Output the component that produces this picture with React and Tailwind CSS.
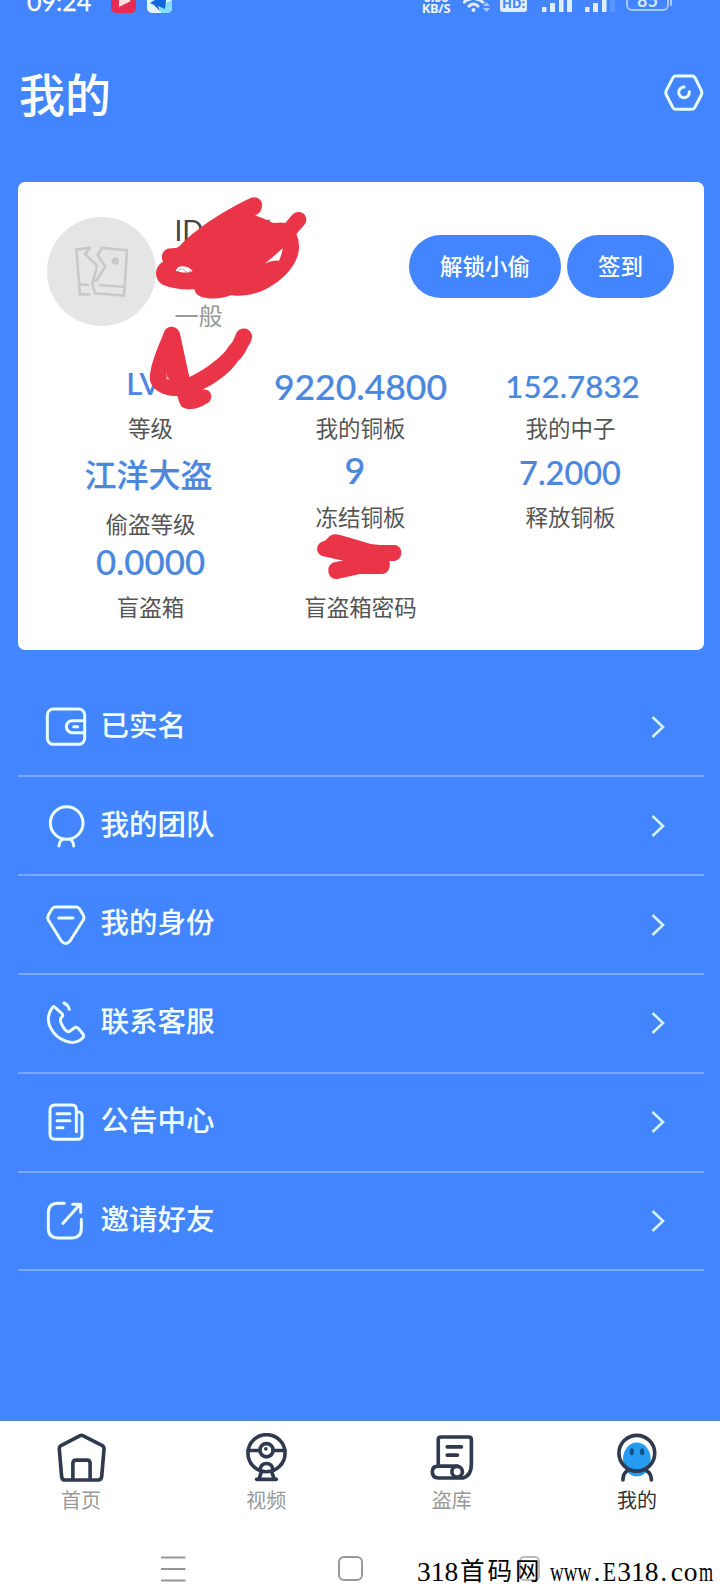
const stats = [
  { value: "LV", label: "等级", valueClass: "text-[31px] pr-[14px] pb-[8px]" },
  { value: "9220.4800", label: "我的铜板", valueClass: "text-[35.5px]" },
  { value: "152.7832", label: "我的中子", valueClass: "text-[31.3px] pl-[4px] pb-[3px]" },
  { value: "江洋大盗", label: "偷盗等级", valueClass: "text-[32px] pr-[4px] pb-[2px]", labelClass: "pt-[7px]" },
  { value: "9", label: "冻结铜板", valueClass: "text-[36px] pr-[11px] pb-[13px]" },
  { value: "7.2000", label: "释放铜板", valueClass: "text-[32.5px] pr-px pb-[7px]" },
  { value: "0.0000", label: "盲盗箱", valueClass: "text-[34.8px] pb-[7px]" },
  { value: "", label: "盲盗箱密码", valueClass: "text-[34px]" },
];

const menu = [
  {
    label: "已实名",
    viewBox: "135 75 132 132",
    icon: (
      <>
        <rect x="142" y="87" width="112" height="106" rx="18" />
        <path d="M254 122H217a18 18 0 0 0 0 36H254M221 140H233" />
      </>
    ),
  },
  {
    label: "我的团队",
    viewBox: "135 372 132 132",
    icon: (
      <>
        <circle cx="200" cy="429" r="49" />
        <path d="M188 478Q178 484 177 498M211 478Q220 484 221 498" />
      </>
    ),
  },
  {
    label: "我的身份",
    viewBox: "135 668 132 132",
    icon: (
      <path d="M166 680H228Q235 680 239 686L250 705Q254 712 250 719L210 782Q197 797 184 782L145 719Q141 712 145 705L156 686Q160 680 166 680ZM176 713H219" />
    ),
  },
  {
    label: "联系客服",
    viewBox: "135 95 132 132",
    icon: (
      <path d="M164 113L185 132Q191 138 184 145C174 155 196 187 206 187C213 187 220 175 227 174Q231 174 235 177L249 194Q254 201 246 208C218 233 170 212 151 174C140 151 146 128 157 115Q160 110 164 113ZM192 101Q204 106 208 120" />
    ),
  },
  {
    label: "公告中心",
    viewBox: "135 391 132 132",
    icon: (
      <path d="M229 486V420Q229 406 216 406H165Q150 406 150 421V494Q150 509 165 509H234Q246 509 246 496V437Q246 426 230 426M171 432H210M171 453H210M171 474H189" />
    ),
  },
  {
    label: "邀请好友",
    viewBox: "135 687 132 132",
    icon: (
      <path d="M193 700H174Q145 700 145 729V775Q145 804 174 804H215Q244 804 244 775V748M189 760L240 703M218 703H242V727" />
    ),
  },
];

const tabs = [
  {
    label: "首页",
    viewBox: "170 96 148 148",
    icon: (
      <path d="M240 104Q244 102 248 104L307 134Q313 138 312 145L305 228Q304 238 294 238H195Q185 238 184 228L177 145Q176 138 182 134ZM218 237V188Q218 178 228 178H260Q270 178 270 188V237" />
    ),
  },
  {
    label: "视频",
    viewBox: "725 96 148 148",
    icon: (
      <>
        <circle cx="799" cy="157" r="56" />
        <circle cx="799" cy="148" r="20" />
        <circle cx="797" cy="144" r="3" strokeWidth="5" />
        <path d="M743 149H779M819 149H855M779 208Q782 188 799 188Q816 188 819 208M784 212L776 236M814 212L823 236M769 236H829" />
      </>
    ),
  },
  {
    label: "盗库",
    viewBox: "202 96 148 148",
    icon: (
      <>
        <path d="M236 194V116Q236 108 244 108H328Q336 108 336 116V190Q336 226 310 232H236Q218 231 218 213Q218 196 236 196H294" />
        <circle cx="293" cy="213" r="16" />
        <path d="M263 138H306M263 163H294" />
      </>
    ),
  },
  {
    label: "我的",
    viewBox: "757 96 148 148",
    active: true,
    icon: (
      <>
        <ellipse cx="832" cy="176" rx="42" ry="51" fill="#259cf0" stroke="none" />
        <circle cx="832" cy="157" r="54" />
        <path d="M804 209Q790 218 790 238M860 209Q876 218 876 238" />
        <path d="M817 148V157M848 148V157" stroke="#164f86" strokeWidth="12" />
      </>
    ),
  },
];

function StatusBar() {
  return (
    <div className="flex h-[14px] items-end overflow-hidden text-white">
      <span className="mb-[5px] ml-[27px] w-[84px] text-[25px] leading-[15px] font-[Lato] [-webkit-text-stroke:0.3px_white]">
        09:24
      </span>
      <svg width="25" height="14" viewBox="0 0 25 14">
        <rect y="-12" width="25" height="25" rx="5" fill="#e52b52" />
        <path d="M8 -6L20 1L8 7Z" fill="#ffdce2" />
      </svg>
      <svg className="ml-[11px]" width="25" height="14" viewBox="0 0 25 14">
        <rect y="-12" width="25" height="25" rx="5" fill="#e3f6ff" />
        <path d="M12 6L25 0V8Q25 13 20 13H14Z" fill="#83dcff" />
        <path d="M3 3L20 -8L18 9L11 6L13 11L7 5Z" fill="#1267db" />
      </svg>
      <div className="ml-[247px] w-[34px] text-center font-['Noto_Sans'] text-[13px] leading-[11px] font-bold tracking-[-0.3px] opacity-90">
        <div>0.00</div>
        <div>KB/S</div>
      </div>
      <svg className="ml-[10px]" width="29" height="14" viewBox="0 0 29 14" fill="none" stroke="#e0edff" strokeWidth="2.8">
        <path d="M0 3Q10 -6 21 3M5 7Q10.500 1 16 7" />
        <circle cx="10.500" cy="10" r="2" fill="#e0edff" stroke="none" />
        <path d="M20 6L23.500 2L27 6ZM20 8L23.500 12L27 8Z" fill="#a8c8ff" stroke="none" />
      </svg>
      <div className="mb-[2px] ml-[8px] flex h-[20px] w-[27px] items-end justify-center rounded-[3px] bg-[#e0edff] pb-[4px] font-['Noto_Sans'] text-[13px] leading-[10px] font-bold text-[#4285ff]">
        HD:
      </div>
      <svg className="ml-[15px]" width="31" height="14" viewBox="0 0 31 14" fill="#e0edff">
        <path d="M0 7h4.500v5h-4.500zM8 3h5v9h-5zM17 0h4.500v12h-4.500zM25 0h5v12h-5z" />
      </svg>
      <svg className="ml-[12px]" width="31" height="14" viewBox="0 0 31 14" fill="#e0edff">
        <path d="M0 7h4.500v5h-4.500zM8 3h5v9h-5zM17 0h4.500v12h-4.500z" />
        <path d="M25 0h5v12h-5z" opacity="0.15" />
      </svg>
      <div className="mb-[3px] ml-[10px] flex h-[22px] w-[43px] items-end justify-center rounded-[6px] border-2 border-[#a8c8ff] pb-[2px] font-[Lato] text-[18px] leading-[13px] font-bold text-[#d5e6ff]">
        85
      </div>
      <div className="mb-[8px] ml-px h-[10px] w-[2px] bg-[#a8c8ff]" />
    </div>
  );
}

function Scribbles() {
  return (
    <svg
      className="pointer-events-none absolute top-[180px] left-0"
      width="420"
      height="480"
      viewBox="0 0 1260 1440"
      fill="#ea3447"
    >
      <path d="M750 55C768 46 788 58 786 78C784 97 774 103 765 106Q795 117 820 129Q842 126 856 129L876 105C892 88 919 96 919 119Q919 128 912 136L889 162Q900 185 896 214C891 251 858 290 823 312C785 340 735 351 692 346C664 359 603 361 587 338L583 328C545 330 517 325 490 315C462 300 460 262 489 245C479 224 492 202 519 205Q532 205 539 198C587 149 650 104 750 55Z" />
      <path d="M527 272Q534 257 549 259Q569 260 578 274Q560 279 544 277ZM794 251Q818 232 848 205Q846 224 837 242Q820 239 794 251Z" fill="#fff" />
      <path d="M534 272Q546 262 554 272T574 274" fill="none" stroke="#aaa" strokeWidth="3" />
      <path d="M801 119L810 119L807 125Z" fill="#555" />
      <path d="M493 454C502 433 534 436 540 461L568 591C606 575 672 527 685 500Q699 487 706 467C713 441 745 438 755 462Q761 475 744 500Q729 531 714 543C687 585 639 613 607 629C638 623 643 664 618 671C597 686 566 693 545 680Q538 671 532 648C497 650 455 632 450 600C447 558 479 492 493 454Z" />
      <path d="M498 577L502 592L509 598L500 598Z" fill="#fbd5da" />
      <path d="M980 1078Q993 1058 1018 1064L1080 1082Q1110 1094 1140 1095H1184C1211 1098 1211 1138 1184 1143H1168C1174 1163 1162 1182 1146 1182H1080L1012 1197C988 1199 981 1174 987 1160Q991 1144 1030 1142L970 1129C945 1121 944 1089 975 1082Z" />
    </svg>
  );
}

function ProfileCard() {
  return (
    <section className="ml-[17.5px] h-[468px] w-[686px] rounded-[7px] bg-white px-[28px] pt-[35px]">
      <div className="flex h-[110px] pl-px">
        <div className="flex h-[109px] w-[109px] items-center justify-center rounded-full bg-[#e5e5e5]">
          <svg width="54" height="54" viewBox="222 195 162 162" fill="none" stroke="#c9c9c9" strokeWidth="8">
            <path d="M272 203L229 209L240 343H271M272 203L255 222L291 257L277 312L285 340L372 347L381 211L306 204L293 225L316 260L286 306M239 313L267 315M296 315L374 321" />
            <circle cx="346" cy="243" r="11" fill="#c9c9c9" stroke="none" />
          </svg>
        </div>
        <div className="flex w-[253.5px] flex-col justify-between pl-[19px]">
          <div className="text-[28px] leading-[26px] text-[#444]">ID</div>
          <div className="text-[24px] leading-[23px] text-[#999]">一般</div>
        </div>
        <div className="flex gap-[6px] pt-[18px]">
          <button className="h-[63px] w-[152px] rounded-full bg-[#4285ff] text-[22.5px] font-medium text-white">
            解锁小偷
          </button>
          <button className="h-[63px] w-[107px] rounded-full bg-[#4285ff] text-[22.5px] font-medium text-white">
            签到
          </button>
        </div>
      </div>
      <div className="grid grid-cols-3 pt-[37px]">
        {stats.map((s) => (
          <div key={s.label} className="flex h-[89.3px] flex-col items-center">
            <div
              className={`flex h-[46px] shrink-0 items-center leading-[36px] font-medium text-[#4b87df] [-webkit-text-stroke:0.2px_#4b87df] ${s.valueClass}`}
            >
              {s.value}
            </div>
            <div className={`shrink-0 text-[22.5px] leading-[38px] text-[#555] ${s.labelClass || ""}`}>{s.label}</div>
          </div>
        ))}
      </div>
    </section>
  );
}

export default function App() {
  return (
    <div className="relative flex h-[1584px] w-[720px] flex-col overflow-hidden bg-[#4285ff] font-[Lato,'Noto_Sans_CJK_SC',sans-serif]">
      <StatusBar />

      <header className="flex h-[168px] shrink-0 items-start justify-between pt-[47px] pr-[16px] pl-[19px]">
        <h1 className="text-[46px] leading-[68px] font-medium text-white">我的</h1>
        <svg className="mt-[12px]" width="40" height="40" viewBox="912 219 120 120" fill="none" stroke="#ebffff" strokeWidth="9" strokeLinecap="round" strokeLinejoin="round">
          <path d="M947 228H997Q1002 228 1005 233L1024 271Q1027 278 1024 285L1004 323Q1001 328 995 328H947Q942 328 939 323L919 285Q916 278 919 271L939 233Q942 228 947 228Z" />
          <path d="M972 261A16 16 0 1 0 988 275" />
        </svg>
      </header>

      <ProfileCard />

      {/* Menu */}
      <nav className="mt-[28.7px] ml-[17.5px] w-[686px]">
        {menu.map((m) => (
          <div key={m.label} className="flex h-[98.8px] items-center border-b-2 border-[#78a9ff] pr-[37px] pl-[27px]">
            <svg width="44" height="44" viewBox={m.viewBox} fill="none" stroke="#ebffff" strokeWidth="9" strokeLinecap="round" strokeLinejoin="round">
              {m.icon}
            </svg>
            <span className="flex-1 pb-[4px] pl-[12px] text-[28.5px] font-medium text-[#f2ffff]">{m.label}</span>
            <svg width="18" height="24" viewBox="0 0 18 24" fill="none" stroke="#d5f2ff" strokeWidth="2.6">
              <path d="M3.500 2L14 12L3.500 22" />
            </svg>
          </div>
        ))}
      </nav>

      {/* Tab bar */}
      <footer className="mt-auto h-[165px] shrink-0 border-t-2 border-[#5b82c4] bg-white">
        <div className="flex justify-between pt-[12px] pr-[59px] pl-[57px]">
          {tabs.map((t) => (
            <div key={t.label} className="flex w-[48px] flex-col items-center">
              <svg className="shrink-0" width="49" height="49" viewBox={t.viewBox} fill="none" stroke="#303a4f" strokeWidth="11" strokeLinecap="round" strokeLinejoin="round">
                {t.icon}
              </svg>
              <span className={`mt-[5px] text-[20px] leading-[26px] ${t.active ? "text-[#333]" : "text-[#999]"}`}>
                {t.label}
              </span>
            </div>
          ))}
        </div>
        <div className="flex pt-[43px] pl-[160px]">
          <svg width="26" height="26" viewBox="0 0 26 26" stroke="#969696" strokeWidth="2">
            <path d="M1 1.500H25.500M1 13H25.500M1 24.500H25.500" />
          </svg>
          <div className="ml-[152px] h-[25px] w-[25px] rounded-[6px] border-2 border-[#999]" />
          <div className="ml-[156px] h-[25px] w-[21px] rounded-[5px] border-2 border-[#bbb]" />
        </div>
      </footer>

      <div className="absolute top-[1555px] left-[417px] flex w-[303px] font-['Liberation_Serif','Noto_Sans_CJK_SC',serif] text-[27.5px] leading-[34px] whitespace-pre text-black">
        <span className="w-[41px]">318</span>
        <span className="w-[94px] pl-[2px] text-[24.5px] tracking-[3px]">首码网</span>
        <span className="w-[48px] pl-[7px]">
          <span className="inline-block origin-left scale-x-[0.69]">www</span>
        </span>
        <span className="w-[15px] pl-[3px]">.</span>
        <span className="w-[14px]">
          <span className="inline-block origin-left scale-x-[0.78]">E</span>
        </span>
        <span className="w-[41px]">318</span>
        <span className="w-[15px] pl-[2px]">.</span>
        <span className="tracking-[1px]">co</span>
        <span className="inline-block origin-left scale-x-[0.66]">m</span>
      </div>

      <Scribbles />
    </div>
  );
}
